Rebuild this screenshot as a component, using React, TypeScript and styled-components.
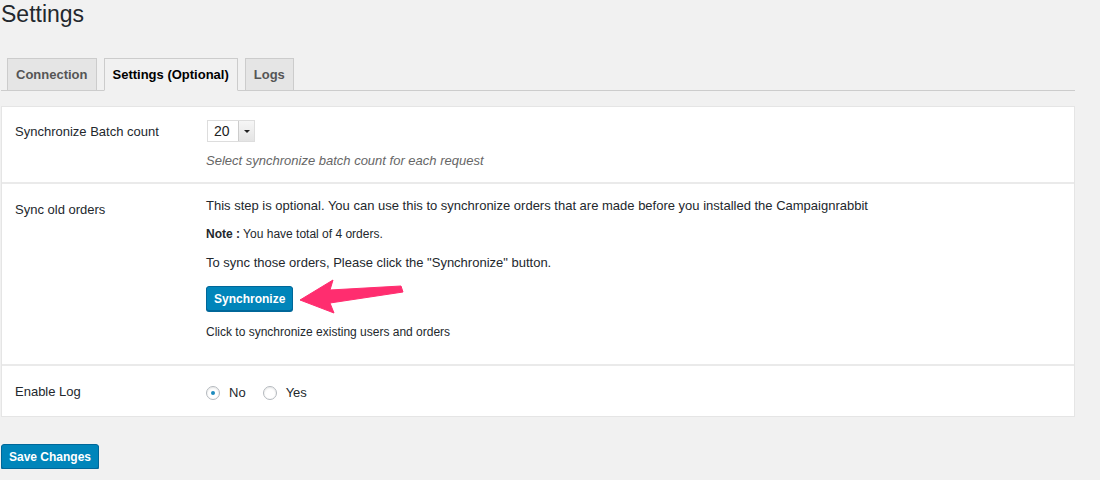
import React from "react";
import styled, { createGlobalStyle } from "styled-components";

const Global = createGlobalStyle`
  html, body { margin: 0; padding: 0; background: #f1f1f1; }
  body { font-family: "Liberation Sans", Arial, sans-serif; font-size: 13px; color: #23282d; }
`;

const Page = styled.div`
  padding: 0 25px 0 1px;
  width: 1074px;
`;

const Title = styled.h1`
  margin: 0;
  padding: 1px 0 0 0;
  font-size: 23px;
  font-weight: 400;
  line-height: 26px;
  color: #23282d;
`;

const TabBar = styled.nav`
  display: flex;
  gap: 7px;
  margin-top: 31px;
  padding-left: 6px;
  border-bottom: 1px solid #ccc;
  height: 32px;
  align-items: flex-end;
`;

const Tab = styled.a<{ $active?: boolean }>`
  display: block;
  box-sizing: border-box;
  height: ${(p) => (p.$active ? "33px" : "32px")};
  margin-bottom: ${(p) => (p.$active ? "-1px" : "0")};
  padding: 0 8px;
  border: 1px solid #ccc;
  border-bottom: ${(p) => (p.$active ? "1px solid #f1f1f1" : "none")};
  background: ${(p) => (p.$active ? "#f1f1f1" : "#e5e5e5")};
  color: ${(p) => (p.$active ? "#000" : "#555")};
  font-weight: 700;
  font-size: 13px;
  line-height: 31px;
  white-space: nowrap;
`;

const Card = styled.section`
  margin-top: 15px;
  background: #fff;
  border: 1px solid #e5e5e5;
`;

const Row = styled.div<{ $pad: string }>`
  display: flex;
  padding: ${(p) => p.$pad};
  & + & { border-top: 2px solid #eaeaea; }
`;

const Label = styled.div<{ $top?: number }>`
  width: 191px;
  padding-left: 13px;
  padding-top: ${(p) => p.$top ?? 0}px;
  box-sizing: border-box;
  flex-shrink: 0;
  font-size: 13px;
  line-height: 20px;
  color: #23282d;
`;

const Field = styled.div`
  flex: 1;
  padding-left: 13px;
`;

const Select = styled.div`
  display: inline-flex;
  margin: -1px 0 0 1px;
  width: 48px;
  height: 22px;
  box-sizing: border-box;
  border: 1px solid #ddd;
  background: #fff;
  font-size: 14px;
  color: #222;
`;

const SelectValue = styled.span`
  flex: 1;
  padding-left: 6px;
  line-height: 21px;
`;

const SelectArrow = styled.span`
  width: 15px;
  border-left: 1px solid #ccc;
  background: linear-gradient(#f6f6f6, #e4e4e4);
  display: flex;
  align-items: center;
  justify-content: center;
  &::after {
    content: "";
    border-left: 3px solid transparent;
    border-right: 3px solid transparent;
    border-top: 3px solid #222;
  }
`;

const Desc = styled.p`
  margin: 9px 0 0 0;
  font-style: italic;
  color: #666;
  font-size: 13px;
  line-height: 20px;
`;

const Text = styled.p<{ $mb?: number }>`
  margin: 0 0 ${(p) => p.$mb ?? 9}px 0;
  font-size: 13px;
  line-height: 20px;
  color: #23282d;
`;

const Small = styled(Text)`
  font-size: 12px;
`;

const Hint = styled(Small)`
  margin: 11px 0 0 0;
`;

const ButtonWrap = styled.div`
  position: relative;
  display: inline-block;
`;

const Button = styled.button`
  display: inline-block;
  height: 25px;
  box-sizing: border-box;
  padding: 0 7px;
  background: #0085ba;
  border: 1px solid #006799;
  border-radius: 3px;
  box-shadow: 0 1px 0 #006799;
  color: #fff;
  font-family: "Liberation Sans", Arial, sans-serif;
  font-weight: 700;
  font-size: 12px;
  line-height: 22px;
  cursor: pointer;
`;

const Arrow = styled.svg`
  position: absolute;
  left: 92px;
  top: -8px;
`;

const Radios = styled.div`
  display: flex;
  align-items: center;
  gap: 17px;
  padding-top: 3px;
`;

const RadioLabel = styled.label`
  display: inline-flex;
  align-items: center;
  gap: 9px;
  font-size: 13px;
  color: #23282d;
`;

const Radio = styled.span<{ $checked?: boolean }>`
  width: 14px;
  height: 14px;
  box-sizing: border-box;
  border-radius: 50%;
  border: 1px solid #b4b9be;
  background: #fff;
  box-shadow: inset 0 1px 2px rgba(0,0,0,0.1);
  display: flex;
  align-items: center;
  justify-content: center;
  &::after {
    content: "";
    display: ${(p) => (p.$checked ? "block" : "none")};
    width: 4px;
    height: 4px;
    border-radius: 50%;
    background: #1e8cbe;
  }
`;

const Footer = styled.div`
  margin-top: 27px;
`;

export default function App() {
  return (
    <>
      <Global />
      <Page>
        <Title>Settings</Title>
        <TabBar>
          <Tab>Connection</Tab>
          <Tab $active>Settings (Optional)</Tab>
          <Tab>Logs</Tab>
        </TabBar>
        <Card>
          <Row $pad="14px 0 11px 0">
            <Label $top={1}>Synchronize Batch count</Label>
            <Field>
              <Select>
                <SelectValue>20</SelectValue>
                <SelectArrow />
              </Select>
              <Desc>Select synchronize batch count for each request</Desc>
            </Field>
          </Row>
          <Row $pad="12px 0 22px 0">
            <Label $top={4}>Sync old orders</Label>
            <Field>
              <Text $mb={8}>This step is optional. You can use this to synchronize orders that are made before you installed the Campaignrabbit</Text>
              <Small><b>Note :</b> You have total of 4 orders.</Small>
              <Text $mb={13}>To sync those orders, Please click the "Synchronize" button.</Text>
              <ButtonWrap>
                <Button>Synchronize</Button>
                <Arrow width="108" height="38" viewBox="0 0 108 38">
                  <polygon
                    points="2,22 35,2 32,12 103,8 105,14 32,25 36,35"
                    fill="#ff2d6f"
                    stroke="#ff2d6f"
                    strokeLinejoin="round"
                    strokeWidth="1"
                  />
                </Arrow>
              </ButtonWrap>
              <Hint>Click to synchronize existing users and orders</Hint>
            </Field>
          </Row>
          <Row $pad="16px 0 14px 0">
            <Label>Enable Log</Label>
            <Field>
              <Radios>
                <RadioLabel><Radio $checked />No</RadioLabel>
                <RadioLabel><Radio />Yes</RadioLabel>
              </Radios>
            </Field>
          </Row>
        </Card>
        <Footer>
          <Button>Save Changes</Button>
        </Footer>
      </Page>
    </>
  );
}
